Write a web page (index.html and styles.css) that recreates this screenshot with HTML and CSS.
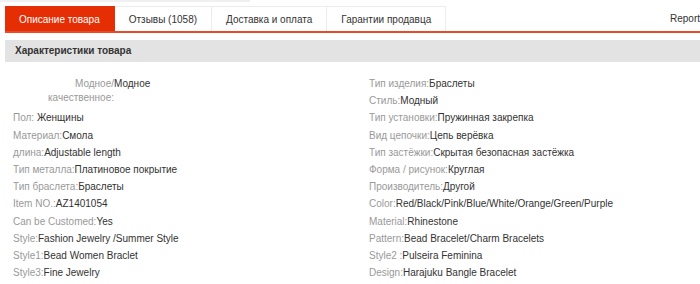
FILE: index.html
```
<!DOCTYPE html>
<html lang="ru">
<head>
  <meta charset="UTF-8">
  <title>Описание товара</title>
  <link rel="stylesheet" href="styles.css">
</head>
<body>
  <div class="top-strip"></div>
  <div class="detail">
    <div class="tabs">
      <a class="tab active">Описание товара</a>
      <a class="tab">Отзывы (1058)</a>
      <a class="tab">Доставка и оплата</a>
      <a class="tab">Гарантии продавца</a>
      <a class="report">Report</a>
    </div>

    <h3 class="section-title">Характеристики товара</h3>

    <ul class="props">
      <li class="prop tall"><span class="name wrap">Модное/ качественное:</span><span class="val">Модное</span></li>
      <li class="prop"><span class="name">Тип изделия:</span><span class="val">Браслеты</span></li>
      <li class="prop"><span class="name">Стиль:</span><span class="val">Модный</span></li>
      <li class="prop"><span class="name">Пол: </span><span class="val">Женщины</span></li>
      <li class="prop"><span class="name">Тип установки:</span><span class="val">Пружинная закрепка</span></li>
      <li class="prop"><span class="name">Материал:</span><span class="val">Смола</span></li>
      <li class="prop"><span class="name">Вид цепочки:</span><span class="val">Цепь верёвка</span></li>
      <li class="prop"><span class="name">длина:</span><span class="val">Adjustable length</span></li>
      <li class="prop"><span class="name">Тип застёжки:</span><span class="val">Скрытая безопасная застёжка</span></li>
      <li class="prop"><span class="name">Тип металла:</span><span class="val">Платиновое покрытие</span></li>
      <li class="prop"><span class="name">Форма / рисунок:</span><span class="val">Круглая</span></li>
      <li class="prop"><span class="name">Тип браслета:</span><span class="val">Браслеты</span></li>
      <li class="prop"><span class="name">Производитель:</span><span class="val">Другой</span></li>
      <li class="prop"><span class="name">Item NO.:</span><span class="val">AZ1401054</span></li>
      <li class="prop"><span class="name">Color:</span><span class="val">Red/Black/Pink/Blue/White/Orange/Green/Purple</span></li>
      <li class="prop"><span class="name">Can be Customed:</span><span class="val">Yes</span></li>
      <li class="prop"><span class="name">Material:</span><span class="val">Rhinestone</span></li>
      <li class="prop"><span class="name">Style:</span><span class="val">Fashion Jewelry /Summer Style</span></li>
      <li class="prop"><span class="name">Pattern:</span><span class="val">Bead Bracelet/Charm Bracelets</span></li>
      <li class="prop"><span class="name">Style1:</span><span class="val">Bead Women Braclet</span></li>
      <li class="prop"><span class="name">Style2 :</span><span class="val">Pulseira Feminina</span></li>
      <li class="prop"><span class="name">Style3:</span><span class="val">Fine Jewelry</span></li>
      <li class="prop"><span class="name">Design:</span><span class="val">Harajuku Bangle Bracelet</span></li>
    </ul>
  </div>
</body>
</html>
```

FILE: styles.css
```
* {
  margin: 0;
  padding: 0;
  box-sizing: border-box;
}
body {
  font-family: "Liberation Sans", Arial, sans-serif;
  font-size: 10px;
  color: #333;
  background: #fff;
  overflow: hidden;
}
.top-strip {
  width: 250px;
  height: 2px;
  background: #f0f0f0;
}
.detail {
  width: 730px;
  margin-left: 5px;
  padding-top: 4px;
}

/* tabs */
.tabs {
  display: flex;
  height: 27px;
  border-bottom: 2px solid #e64c2a;
}
.tab {
  display: block;
  height: 25px;
  line-height: 25px;
  padding: 0 14px;
  color: #333;
  border-top: 1px solid #ececec;
  border-right: 1px solid #ececec;
}
.tab.active {
  background: #e62e04;
  color: #fff;
  border-color: #e62e04;
}
.report {
  margin-left: auto;
  margin-right: 35px;
  line-height: 25px;
  color: #333;
}

/* section */
.section-title {
  margin-top: 7px;
  height: 22px;
  line-height: 22px;
  padding-left: 10px;
  background: #e3e3e3;
  font-size: 10px;
  font-weight: bold;
  color: #333;
}

/* property list */
.props {
  list-style: none;
  display: grid;
  grid-template-columns: 356px 356px;
  grid-auto-rows: 17.2px;
  padding: 13px 0 0 8px;
}
.prop {
  line-height: 17.2px;
  white-space: nowrap;
}
.prop.tall {
  grid-row: span 2;
  display: flex;
  align-items: flex-start;
}
.name {
  color: #999;
}
.name.wrap {
  display: inline-block;
  width: 66px;
  margin-left: 35px;
  text-align: right;
  white-space: normal;
  line-height: 14px;
  padding-top: 1.6px;
}
.prop.tall .val {
  line-height: 14px;
  padding-top: 1.6px;
}
.val {
  color: #333;
}
```
